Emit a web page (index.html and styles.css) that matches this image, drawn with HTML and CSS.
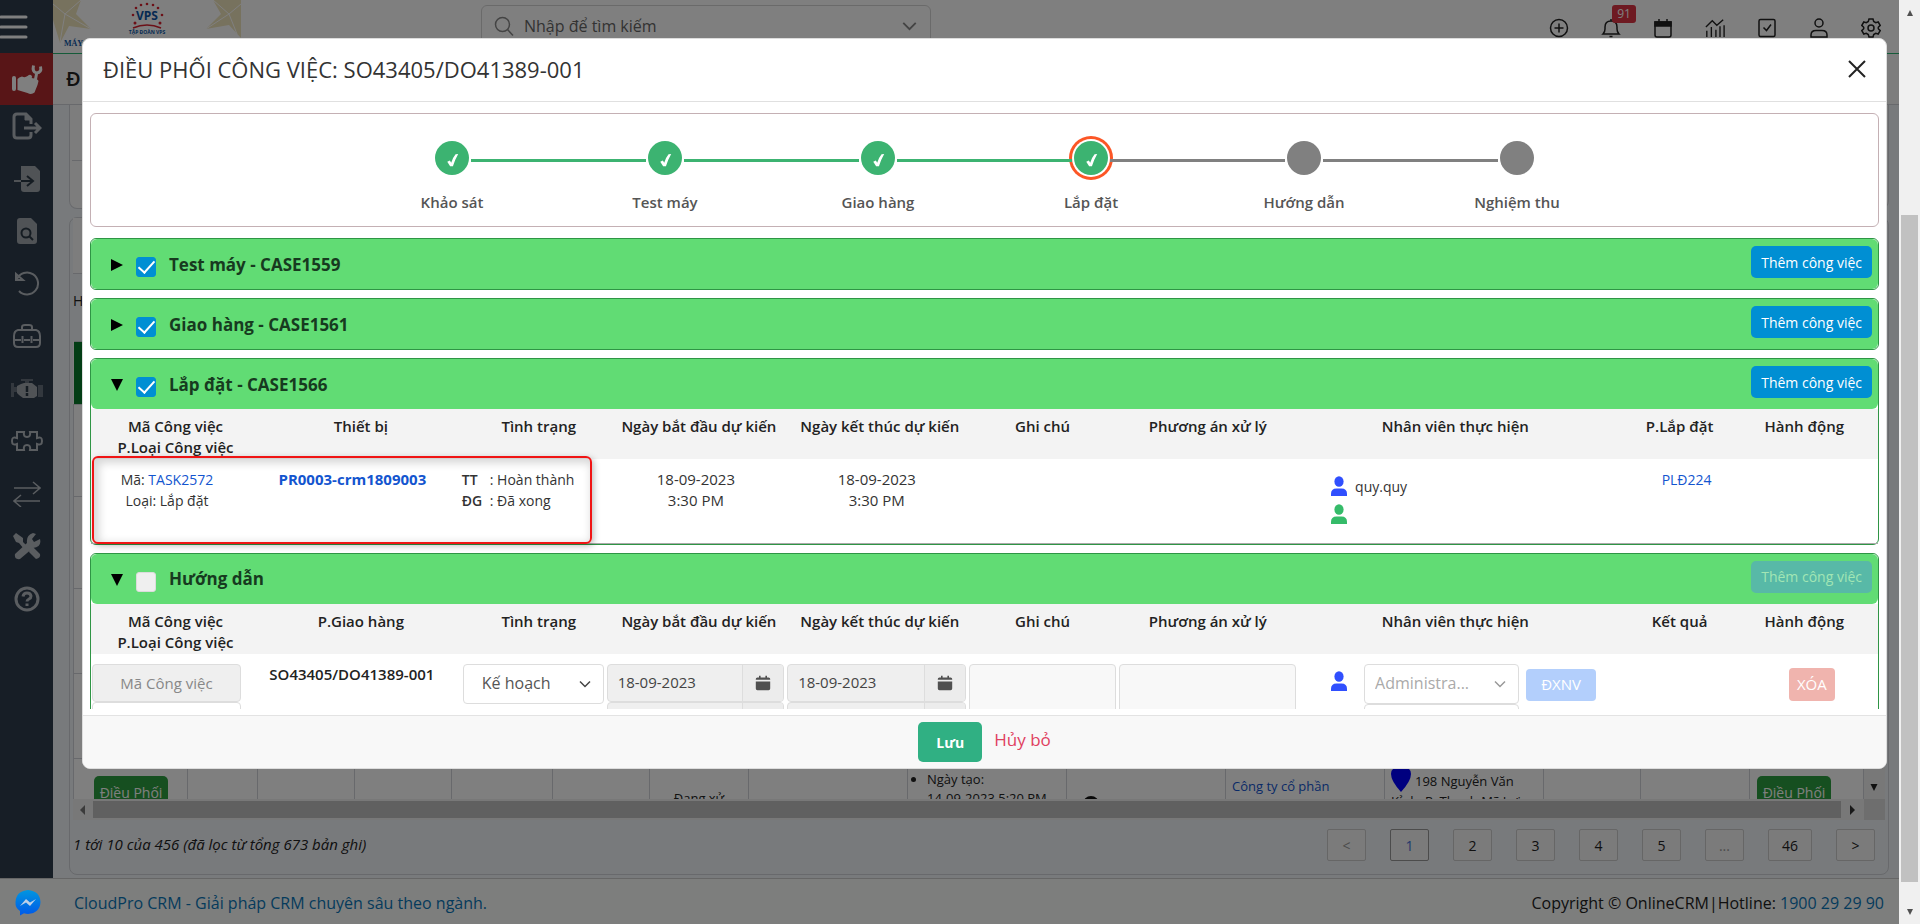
FILE: index.html
```html
<!DOCTYPE html>
<html lang="vi">
<head>
<meta charset="utf-8">
<title>Điều phối công việc</title>
<link rel="stylesheet" href="styles.css">
</head>
<body>
<svg class="defs" aria-hidden="true">
  <symbol id="i-cal" viewBox="0 0 20 20"><path fill="currentColor" d="M5 1h2v2h6V1h2v2h2q2 0 2 2v1H1V5q0-2 2-2h2zM1 8h18v9q0 2-2 2H3q-2 0-2-2z"/></symbol>
  <symbol id="i-user" viewBox="0 0 16 20"><ellipse cx="8" cy="5.5" rx="4.6" ry="5.3" fill="currentColor"/><path fill="currentColor" d="M0 20v-2q0-5.500 5.500-5.500h5q5.500 0 5.500 5.500v2z"/></symbol>
  <symbol id="i-chev" viewBox="0 0 12 8"><path fill="none" stroke="currentColor" stroke-width="1.500" d="M1 1.500l5 5 5-5"/></symbol>
  <symbol id="i-tick" viewBox="0 0 14 16"><path fill="currentColor" d="M1 10l3-1.500 1.500 2.500Q7.500 5 10.500 1.500l3-.5Q10 7 7.500 15H4.300z"/></symbol>
  <symbol id="i-right" viewBox="0 0 12 12"><path fill="currentColor" d="M0 0l12 6-12 6z"/></symbol>
  <symbol id="i-down" viewBox="0 0 12 12"><path fill="currentColor" d="M0 0h12L6 12z"/></symbol>
</svg>
<div class="window">
  <div class="app">
    <div class="upper">
      <nav class="side" aria-label="Menu">
        <button class="burger" aria-label="Menu"><svg width="28" height="26" viewBox="0 0 28 26"><path stroke="currentColor" stroke-width="3" stroke-linecap="round" d="M1 3h25M1 13h25M1 23h25"/></svg></button>
        <a href="#" class="active" aria-label="Dịch vụ"><svg width="32" height="32" viewBox="0 0 32 32" fill="currentColor"><rect x="1" y="13" width="4" height="15" rx="2"/><path d="M6.500 16q1.500-2 4.500-2.500 3 1.500 5.500-.5 2.500-2 4-.5 1.500 1.500 0 2.500 6.500.5 7 3l-1 4-3 7.500q-3 2.500-7 .5L6.500 27z"/><path fill="none" stroke="currentColor" stroke-width="3" d="M25.500 11L24 19M22.500 2.500Q21 9 25.500 10q5.500-.5 4-6.500"/></svg></a>
        <div class="links">
          <a href="#" aria-label="Xuất"><svg width="30" height="28" viewBox="0 0 30 28" fill="none" stroke="currentColor" stroke-width="3"><path d="M19 20v3q0 3-3 3H5q-3 0-3-3V5q0-3 3-3h9l5 5v5M12 16h16M23 11l5 5-5 5"/><path fill="currentColor" d="M13 2v6h6" stroke-width="1"/></svg></a>
          <a href="#" class="dim" aria-label="Nhập"><svg width="30" height="28" viewBox="0 0 30 28"><path fill="currentColor" d="M9 1h14l5 5v18q0 3-3 3H12q-3 0-3-3z"/><path fill="none" stroke="#2b3845" stroke-width="2" d="M9 16h11M15 11l6 5-6 5"/><path stroke="currentColor" stroke-width="2" d="M2 16h7"/></svg></a>
          <a href="#" class="dim" aria-label="Tra cứu"><svg width="30" height="28" viewBox="0 0 30 28"><path fill="currentColor" d="M5 4q0-3 3-3h11l6 6v17q0 3-3 3H8q-3 0-3-3z"/><g fill="none" stroke="#2b3845" stroke-width="2"><circle cx="14" cy="16" r="4.500"/><path d="M17 19l4 4"/></g></svg></a>
          <a href="#" aria-label="Hoàn tác"><svg width="26" height="26" viewBox="0 0 26 26" fill="none" stroke="currentColor" stroke-width="2"><path d="M3 8A11 11 0 1 1 5 20M2 3v6h7z"/></svg></a>
          <a href="#" aria-label="Công cụ"><svg width="28" height="26" viewBox="0 0 28 26" fill="none" stroke="currentColor" stroke-width="2"><path d="M9 7V4q0-2 3-2h4q3 0 3 2v3M5 7h18q4 1 4 6v7q0 4-4 4H5q-4 0-4-4v-7q0-5 4-6zM1 17h7M11 17h6M20 17h7M9.500 13v7M18.500 13v7"/></svg></a>
          <a href="#" class="dim" aria-label="Cảnh báo"><svg width="34" height="22" viewBox="0 0 34 22"><path fill="currentColor" d="M14 5h8l5 4v9l-3 2H13l-4-3-2-2V8l4-2z"/><path fill="currentColor" opacity=".5" d="M11 1h12v2h-4v2h-4V3h-4zM1 5h3v4h3v5H4v5H1zM28 7h5v12h-5z"/><path stroke="#2b3845" stroke-width="2.500" d="M17 8v6M17 15v3"/></svg></a>
          <a href="#" aria-label="Tiện ích"><svg width="34" height="22" viewBox="0 0 34 22" fill="none" stroke="currentColor" stroke-width="2"><path d="M7 2h7q-1 5 3 5t3-5h7v6q5-2 5 3t-5 3v6h-7q1-5-3-5t-3 5H7v-6q-5 2-5-3t5-3z"/></svg></a>
          <a href="#" aria-label="Chuyển đổi"><svg width="28" height="26" viewBox="0 0 28 26" fill="none" stroke="currentColor" stroke-width="1.500"><path d="M1 7h26M20 1l7 6-7 6M27 20H1M8 14l-7 6 7 6"/></svg></a>
          <a href="#" aria-label="Sửa chữa"><svg width="28" height="28" viewBox="0 0 28 28"><path fill="currentColor" d="M3 1l7 5v4l4 4-3 3-5-6-3-1-3-6zM17 16l3-1 7 7q1 4-4 5l-7-7z"/><path fill="currentColor" d="M2 22L14 11Q13 3 20 1l3 1-4 5 2 3 6-3q2 8-7 9L7 27q-6 1-5-5z"/></svg></a>
          <a href="#" aria-label="Trợ giúp"><svg width="26" height="26" viewBox="0 0 26 26" fill="none" stroke="currentColor" stroke-width="3"><circle cx="13" cy="13" r="11"/><path d="M9 10.500q.5-3.500 4-3.500t4 3q0 2-2 3t-2 2.500M13 17.500v2.500"/></svg></a>
        </div>
      </nav>
      <div class="main">
        <header class="top">
          <svg class="logo" width="188" height="50" viewBox="0 0 188 50" role="img" aria-label="Tập đoàn VPS">
            <path fill="#efe4bd" d="M0 0h28l-5 14 15 15-22-3-9 17L0 20zM160 0h28v38l-12-13-23 4 15-15z"/>
            <path fill="none" stroke="#fff" d="M0 4l12 10L28 0M12 14l26 15M12 14L7 42M188 4l-12 10L160 0M176 14l-23 15M176 14l8 20"/>
            <g fill="#d8202f"><circle cx="83" cy="8" r="1.300"/><circle cx="88" cy="5" r="1.300"/><circle cx="94" cy="4" r="1.300"/><circle cx="100" cy="5" r="1.300"/><circle cx="105" cy="8" r="1.300"/><circle cx="109" cy="15" r="1.300"/><circle cx="80" cy="15" r="1.300"/><circle cx="82" cy="23" r="1.500"/><circle cx="107" cy="23" r="1.500"/></g>
            <path fill="none" stroke="#d8202f" stroke-width="1.500" d="M80 28q14-6 28 0"/>
            <text x="94" y="20" text-anchor="middle" class="logo-a">VPS</text>
            <text x="94" y="34" text-anchor="middle" class="logo-b">TẬP ĐOÀN VPS</text>
            <text x="11" y="46" class="logo-c">MÁY</text>
          </svg>
          <label class="search">
            <svg width="20" height="20" viewBox="0 0 20 20" fill="none" stroke="currentColor" stroke-width="1.500"><circle cx="8.500" cy="8.500" r="7"/><path d="M13.500 13.500l5.500 6"/></svg>
            <input type="text" placeholder="Nhập để tìm kiếm" aria-label="Tìm kiếm">
            <svg width="17" height="10"><use href="#i-chev"/></svg>
          </label>
          <div class="tools">
            <button aria-label="Thêm"><svg viewBox="0 0 20 20"><circle cx="10" cy="10" r="8.500"/><path d="M10 5.500v9M5.500 10h9"/></svg></button>
            <button aria-label="Thông báo"><svg viewBox="0 0 20 20"><path d="M2 16h16q-2-2-2-5V9q0-6-6-6T4 9v2q0 3-2 5zM10 1v2M8.500 18.500h3"/></svg><span class="badge">91</span></button>
            <button aria-label="Lịch"><svg viewBox="0 0 20 20"><path d="M2 4h16v13q0 2-2 2H4q-2 0-2-2zM6 1v3M14 1v3"/><path fill="currentColor" d="M2 4h16v4H2z"/></svg></button>
            <button aria-label="Báo cáo"><svg viewBox="0 0 22 20"><path d="M1 9l7-7 5 5 7-6M2 20v-7M7 20v-11M12 20v-8M16.500 20V8M21 20V7"/></svg></button>
            <button aria-label="Công việc"><svg viewBox="0 0 20 20"><rect x="2" y="1.500" width="16" height="17" rx="1.500"/><path d="M6.500 9.500l3 3 4.500-6"/></svg></button>
            <button aria-label="Tài khoản"><svg viewBox="0 0 20 20"><circle cx="10" cy="5" r="4"/><path d="M2 19v-2q0-4.500 5-4.500h6q5 0 5 4.500v2z"/></svg></button>
            <button aria-label="Cài đặt"><svg viewBox="0 0 20 20"><circle cx="10" cy="10" r="3"/><path d="M8 1h4l.7 2.500 2 1.200 2.500-.7 2 3.400-1.900 1.800v1.600l1.900 1.800-2 3.400-2.500-.7-2 1.200L12 19H8l-.7-2.500-2-1.200-2.500.7-2-3.400 1.900-1.800V9.200L.8 7.400l2-3.400 2.500.7 2-1.200z"/></svg></button>
          </div>
        </header>
        <div class="titlebar"><h1>ĐI</h1></div>
        <section class="card card-filter"><div></div></section>
        <section class="card card-list">
          <div class="listbar"></div>
          <div class="tabs">H</div>
          <div class="scroller">
            <div class="grid-view">
              <table class="grid">
                <colgroup><col class="g114"><col class="g70"><col class="g97"><col class="g97"><col class="g102"><col class="g97"><col class="g99"><col class="g159"><col class="g159"><col class="g159"><col class="g159"><col class="g159"><col class="g97"><col class="g109"><col></colgroup>
                <thead><tr><th></th><th></th><th></th><th></th><th></th><th></th><th></th><th></th><th></th><th></th><th></th><th></th><th></th><th></th><th></th></tr></thead>
                <tbody>
                  <tr class="tall"><td></td><td></td><td></td><td></td><td></td><td></td><td></td><td></td><td></td><td></td><td></td><td></td><td></td><td></td><td></td></tr>
                  <tr class="tall"><td></td><td></td><td></td><td></td><td></td><td></td><td></td><td></td><td></td><td></td><td></td><td></td><td></td><td></td><td></td></tr>
                  <tr><td></td><td></td><td></td><td></td><td></td><td></td><td></td><td></td><td></td><td></td><td></td><td></td><td></td><td></td><td></td></tr>
                  <tr><td></td><td></td><td></td><td></td><td></td><td></td><td></td><td></td><td></td><td></td><td></td><td></td><td></td><td></td><td></td></tr>
                  <tr class="last">
                    <td><button class="dispatch">Điều Phối</button></td><td></td><td></td><td></td><td></td><td></td>
                    <td class="state">Đang xử</td>
                    <td></td>
                    <td><ul><li>Ngày tạo:<br>14-09-2023 5:20 PM</li></ul></td>
                    <td class="dot"><span></span></td>
                    <td class="company"><a href="#">Công ty cổ phần</a></td>
                    <td class="addr"><svg width="20" height="27" viewBox="0 0 20 27"><path fill="#00f" d="M0 9a10 9 0 0 1 20 0q0 7-10 18Q0 16 0 9z"/></svg>198 Nguyễn Văn<br>Kỉnh, P. Thạnh Mỹ Lợi</td>
                    <td></td><td></td>
                    <td><button class="dispatch">Điều Phối</button></td>
                  </tr>
                </tbody>
              </table>
              <div class="vbar" aria-hidden="true"><svg width="10" height="7"><use href="#i-down"/></svg></div>
            </div>
            <div class="hbar" aria-hidden="true"><span class="arr arr-l"></span><span class="hthumb"></span><span class="arr arr-r"></span><span class="corner"></span></div>
          </div>
          <div class="pager">
            <em>1 tới 10 của 456 (đã lọc từ tổng 673 bản ghi)</em>
            <div class="pages"><button class="off">&lt;</button><button class="on">1</button><button>2</button><button>3</button><button>4</button><button>5</button><button class="off">...</button><button>46</button><button>&gt;</button></div>
          </div>
        </section>
      </div>
    </div>
    <footer class="foot">
      <a href="#">CloudPro CRM - Giải pháp CRM chuyên sâu theo ngành.</a>
      <span>Copyright © OnlineCRM|Hotline: <a href="#">1900 29 29 90</a></span>
    </footer>

    <div class="layer">
      <div class="modal" role="dialog" aria-labelledby="mt">
        <div class="modal-head">
          <h2 id="mt">ĐIỀU PHỐI CÔNG VIỆC: SO43405/DO41389-001</h2>
          <button aria-label="Đóng"><svg width="18" height="18" viewBox="0 0 18 18"><path stroke="#222" stroke-width="2" d="M1 1l16 16M17 1L1 17"/></svg></button>
        </div>
        <div class="modal-body">
          <ol class="steps">
            <li class="done"><i><svg width="13" height="14"><use href="#i-tick"/></svg></i>Khảo sát</li>
            <li class="done"><i><svg width="13" height="14"><use href="#i-tick"/></svg></i>Test máy</li>
            <li class="done"><i><svg width="13" height="14"><use href="#i-tick"/></svg></i>Giao hàng</li>
            <li class="done now"><i><svg width="13" height="14"><use href="#i-tick"/></svg></i>Lắp đặt</li>
            <li><i></i>Hướng dẫn</li>
            <li><i></i>Nghiệm thu</li>
          </ol>
          <section class="panel">
            <div class="panel-head"><button class="tri" aria-label="Mở"><svg width="12" height="12"><use href="#i-right"/></svg></button><label><input type="checkbox" checked>Test máy - CASE1559</label><button class="add">Thêm công việc</button></div>
          </section>
          <section class="panel">
            <div class="panel-head"><button class="tri" aria-label="Mở"><svg width="12" height="12"><use href="#i-right"/></svg></button><label><input type="checkbox" checked>Giao hàng - CASE1561</label><button class="add">Thêm công việc</button></div>
          </section>
          <section class="panel">
            <div class="panel-head"><button class="tri" aria-label="Đóng"><svg width="12" height="12"><use href="#i-down"/></svg></button><label><input type="checkbox" checked>Lắp đặt - CASE1566</label><button class="add">Thêm công việc</button></div>
            <table class="tasks">
              <colgroup><col class="c1"><col class="c2"><col class="c3"><col class="c4"><col class="c5"><col class="c6"><col class="c7"><col class="c8"><col class="c9"><col class="c10"></colgroup>
              <thead><tr><th>Mã Công việc<br>P.Loại Công việc</th><th>Thiết bị</th><th>Tình trạng</th><th>Ngày bắt đầu dự kiến</th><th>Ngày kết thúc dự kiến</th><th>Ghi chú</th><th>Phương án xử lý</th><th>Nhân viên thực hiện</th><th>P.Lắp đặt</th><th>Hành động</th></tr></thead>
              <tbody><tr class="view">
                <td>Mã: <a href="#">TASK2572</a><br>Loại: Lắp đặt</td>
                <td><a href="#" class="strong">PR0003-crm1809003</a></td>
                <td><dl><dt>TT</dt><dd>: Hoàn thành</dd><dt>ĐG</dt><dd>: Đã xong</dd></dl></td>
                <td class="when">18-09-2023<br>3:30 PM</td>
                <td class="when">18-09-2023<br>3:30 PM</td>
                <td></td><td></td>
                <td><div class="staff blue"><svg width="16" height="20"><use href="#i-user"/></svg>quy.quy</div><div class="staff green"><svg width="16" height="20"><use href="#i-user"/></svg></div></td>
                <td class="plan"><a href="#">PLĐ224</a></td>
                <td></td>
              </tr></tbody>
            </table>
            <div class="highlight"></div>
          </section>
          <section class="panel">
            <div class="panel-head"><button class="tri" aria-label="Đóng"><svg width="12" height="12"><use href="#i-down"/></svg></button><label><input type="checkbox">Hướng dẫn</label><button class="add" disabled>Thêm công việc</button></div>
            <table class="tasks">
              <colgroup><col class="c1"><col class="c2"><col class="c3"><col class="c4"><col class="c5"><col class="c6"><col class="c7"><col class="c8"><col class="c9"><col class="c10"></colgroup>
              <thead><tr><th>Mã Công việc<br>P.Loại Công việc</th><th>P.Giao hàng</th><th>Tình trạng</th><th>Ngày bắt đầu dự kiến</th><th>Ngày kết thúc dự kiến</th><th>Ghi chú</th><th>Phương án xử lý</th><th>Nhân viên thực hiện</th><th>Kết quả</th><th>Hành động</th></tr></thead>
              <tbody><tr class="edit">
                <td><input class="code" type="text" placeholder="Mã Công việc" aria-label="Mã Công việc" disabled><input class="code open" type="text" aria-label="Loại"></td>
                <td class="order">SO43405/DO41389-001</td>
                <td><div class="pick"><select aria-label="Tình trạng"><option>Kế hoạch</option></select><svg width="12" height="8"><use href="#i-chev"/></svg></div></td>
                <td><div class="date"><input type="text" value="18-09-2023" aria-label="Ngày bắt đầu"><button aria-label="Chọn ngày"><svg width="16" height="18"><use href="#i-cal"/></svg></button></div><div class="date"><input type="text" aria-label="Giờ bắt đầu"><button aria-label="Chọn giờ"></button></div></td>
                <td><div class="date"><input type="text" value="18-09-2023" aria-label="Ngày kết thúc"><button aria-label="Chọn ngày"><svg width="16" height="18"><use href="#i-cal"/></svg></button></div><div class="date"><input type="text" aria-label="Giờ kết thúc"><button aria-label="Chọn giờ"></button></div></td>
                <td><textarea aria-label="Ghi chú"></textarea></td>
                <td><textarea aria-label="Phương án xử lý"></textarea></td>
                <td><div class="assign"><svg class="who" width="16" height="20"><use href="#i-user"/></svg><div class="pick pale"><select aria-label="Nhân viên" disabled><option>Administra...</option></select><svg width="12" height="8"><use href="#i-chev"/></svg></div><button class="dx" disabled>ĐXNV</button></div>
                <div class="assign second"><div class="pick pale"><select aria-label="Nhân viên phụ" disabled></select></div><button class="dx" aria-label="Đề xuất" disabled></button></div></td>
                <td></td>
                <td><button class="del" disabled>XÓA</button></td>
              </tr></tbody>
            </table>
          </section>
        </div>
        <div class="modal-foot"><button class="save">Lưu</button><a href="#" class="cancel">Hủy bỏ</a></div>
      </div>
      <a href="#" class="messenger" aria-label="Messenger"><svg width="26" height="26" viewBox="0 0 26 26"><defs><linearGradient id="mg" x1="0" y1="0" x2="0" y2="1"><stop offset="0" stop-color="#0096e0"/><stop offset="1" stop-color="#0058e8"/></linearGradient></defs><path fill="url(#mg)" d="M13 0q12 1 12.500 12Q25 23 13 24q-2 0-4-.7L5 25.500V21Q0 18 .5 12 1 1 13 0z"/><path fill="#bdd0e8" d="M5 16l6-7 4 3.500 6-3.500-6 7-4-3.500z"/></svg></a>
    </div>
  </div>
  <div class="winbar" aria-hidden="true"><svg class="up" width="10" height="6"><use href="#i-down"/></svg><span></span><svg width="10" height="6"><use href="#i-down"/></svg></div>
</div>
</body>
</html>
```
FILE: styles.css
```css
* { box-sizing: border-box; }
body { margin: 0; font: 14px/21px "Open Sans", "Noto Sans", sans-serif; color: #222; }
button, input, select, textarea { font: inherit; color: inherit; margin: 0; }
button { padding: 0; border: 0; background: none; }
a { color: #1355cf; text-decoration: none; }
h1, h2, ol, ul, dl, dd { margin: 0; padding: 0; }
.defs { position: absolute; width: 0; height: 0; }
svg { display: block; }

.window { display: flex; height: 100vh; overflow: hidden; }
.app { position: relative; flex: 1; min-width: 0; display: flex; flex-direction: column; }
.upper { flex: 1; min-height: 0; display: flex; }

/* Window scroll bar */
.winbar { width: 21px; padding: 10px 0 9px; background: #f0f0f0; color: #505050; display: flex; flex-direction: column; align-items: center; }
.winbar span { flex: 1; width: 17px; margin: 199px 0 27px; background: #c1c1c1; }
.winbar .up { transform: rotate(180deg); }

/* Side menu */
.side { width: 53px; background: #2e3c4c; color: #b4bac0; }
.side a, .side button { display: flex; align-items: center; justify-content: center; }
.burger { width: 100%; height: 53px; color: #fff; }
.side .burger { justify-content: flex-start; }
.side .active { height: 52px; background: #b02a2e; color: #fff; }
.links { display: flex; flex-direction: column; justify-content: space-between; height: 515px; }
.links a { height: 42px; color: inherit; }
.links .dim { color: #a0a6ac; }

/* Header */
.main { flex: 1; min-width: 0; display: flex; flex-direction: column; background: #f1f4f9; }
.top { height: 54px; background: #fff; border-bottom: 1px solid #2bb673; display: flex; align-items: flex-start; }
.logo-a { font: 700 12px "Open Sans", sans-serif; fill: #0c55a5; }
.logo-b { font: 700 5px "Open Sans", sans-serif; fill: #0c55a5; }
.logo-c { font: 700 8px "Liberation Serif", serif; fill: #0c55a5; }
.search { display: flex; align-items: center; gap: 10px; width: 450px; height: 42px; margin: 5px 0 0 240px; padding: 0 12px; border: 1px solid #d5d5d5; border-radius: 6px; color: #888; }
.search input { flex: 1; border: 0; background: none; font-size: 16px; outline: 0; padding: 0; }
.search input::placeholder { color: #666; opacity: 1; }
.tools { display: flex; gap: 31px; margin: 17px 17px 0 auto; }
.tools button { position: relative; width: 21px; height: 21px; color: #222; }
.tools svg { width: 20px; height: 20px; fill: none; stroke: currentColor; stroke-width: 1.500; }
.badge { position: absolute; left: 11px; top: -12px; width: 24px; height: 18px; border-radius: 3px; background: #dc3545; color: #fff; font-size: 12px; line-height: 18px; }
.titlebar { height: 51px; padding: 11px 13px; background: #fafafa; border-bottom: 1px solid #d0d3d8; }
h1 { font-size: 20px; line-height: 28px; font-weight: 600; }

/* Background cards */
.card { margin: 0 10px 0 16px; border: 1px solid #d0d3d8; border-radius: 8px; background: #fafafa; }
.card-filter { height: 104px; border-top: 0; border-radius: 0 0 8px 8px; padding: 0 2px; }
.card-filter div { height: 56px; border-bottom: 1px solid #d0d3d8; }
.card-list { flex: 1; min-height: 0; margin-top: 8px; margin-bottom: 3px; padding: 0 3px; background: #f1f4f9; display: flex; flex-direction: column; }
.listbar { height: 56px; background: #fafafa; border-bottom: 1px solid #d0d3d8; }
.tabs { height: 67px; padding-top: 16px; }
.scroller { flex: 1; min-height: 0; display: flex; flex-direction: column; }
.grid-view { flex: 1; min-height: 0; overflow: hidden; display: flex; background: #fff; }
.grid { width: 100%; height: 100px; flex: 1; table-layout: fixed; border-collapse: collapse; font-size: 13px; line-height: 19px; }
.grid th { height: 63px; background: #067a2a; border-top: 1px solid #d0d3d8; }
.grid td { height: 85px; padding: 0; vertical-align: top; border: 1px solid #d0d3d8; }
.grid .tall td { height: 92px; }
.grid .last td { height: 120px; }
.g114 { width: 114px; } .g70 { width: 70px; } .g97 { width: 97px; } .g99 { width: 99px; } .g102 { width: 101px; } .g159 { width: 159px; } .g109 { width: 109px; }
.dispatch { display: block; width: 74px; height: 32px; margin: 17px 0 0 20px; border-radius: 5px; background: #2d9f40; color: #fff; font-size: 14px; }
td:last-child .dispatch { margin-left: 7px; }
.grid .state { padding-top: 30px; text-align: center; }
.grid ul { padding: 11px 0 0 19px; }
.grid .dot span { display: block; width: 16px; height: 16px; margin: 37px 0 0 16px; border-radius: 50%; background: #111; }
.grid .company { padding: 18px 0 0 6px; }
.grid .addr { padding: 13px 0 0 6px; white-space: nowrap; }
.grid .addr svg { display: inline-block; height: 27px; margin: -15px 4px 0 0; vertical-align: -6px; }
.vbar { width: 21px; padding: 18px 5px; background: #f0f0f0; display: flex; align-items: flex-end; }
.vbar svg { margin-bottom: -10px; }
.hbar { display: flex; align-items: center; height: 21px; background: #f0f0f0; }
.hthumb { flex: 1; height: 17px; background: #c1c1c1; }
.arr { border: 5px solid transparent; }
.arr-l { margin: 0 8px 0 7px; border-left: 0; border-right-color: #777; }
.arr-r { margin: 0 9px; border-right: 0; border-left-color: #333; }
.corner { width: 21px; height: 21px; background: #dcdcdc; }
.pager { display: flex; justify-content: space-between; padding: 9px 10px 0 0; height: 54px; }
.pager em { line-height: 30px; font-size: 15px; }
.pages { display: flex; gap: 24px; }
.pages button { min-width: 39px; height: 32px; padding: 0 13px; border: 1px solid #ccc; border-radius: 2px; background: #f6f6f6; font-size: 14px; }
.pages .on { border-color: #999; color: #4472d8; }
.pages .off { color: #999; }

.foot { display: flex; justify-content: space-between; align-items: center; height: 46px; padding: 3px 15px 0 74px; background: #fafcfa; border-top: 1px solid #ccc; font-size: 16px; }
.foot a { color: #0b77b8; }

/* Dialog */
.layer { position: absolute; inset: 0; padding: 38px 12px 0 82px; background: rgba(0, 0, 0, .5); }
.messenger { position: absolute; left: 15px; bottom: 8px; }
.modal { display: flex; flex-direction: column; height: calc(100vh - 193px); border: 1px solid #ddd; border-radius: 8px; background: #fff; overflow: hidden; }
.modal-head { display: flex; justify-content: space-between; align-items: center; height: 63px; padding: 0 20px 2px; border-bottom: 1px solid #e0e0e0; }
.modal-head h2 { font-size: 22px; line-height: 28px; font-weight: 500; color: #333; }
.modal-body { flex: 1; min-height: 0; margin-bottom: 6px; padding: 11px 7px 0; overflow: hidden; }
.modal-foot { display: flex; justify-content: center; gap: 12px; height: 53px; padding-top: 6px; border-top: 1px solid #e3e3e3; background: #f8f8f8; }
.save { width: 64px; height: 40px; border-radius: 5px; background: #30b083; color: #fff; font-weight: 700; }
.cancel { font-size: 17px; line-height: 36px; color: #e0405f; }

.steps { display: flex; justify-content: center; height: 114px; padding-top: 27px; border: 1px solid #c4b0b4; border-radius: 6px; list-style: none; font-size: 15px; font-weight: 600; color: #555; }
.steps li { position: relative; width: 213px; display: flex; flex-direction: column; align-items: center; gap: 17px; }
.steps i { display: flex; align-items: center; justify-content: center; width: 34px; height: 34px; padding-top: 4px; border-radius: 50%; background: #808080; color: #fff; }
.steps li + li::before { content: ""; position: absolute; top: 18px; right: calc(50% + 19px); width: calc(100% - 38px); height: 3px; background: #808080; }
.steps .done i { background: #3cb371; }
.steps li.done + .done::before { background: #3cb371; }
.steps .now i { box-shadow: 0 0 0 2px #fff, 0 0 0 5px #fc5626; }

.panel { position: relative; margin-top: 8px; border: 1px solid #2f9545; border-radius: 6px; }
.steps + .panel { margin-top: 11px; }
.panel-head { display: flex; align-items: flex-start; height: 50px; padding: 7px 6px 0 20px; border-radius: 6px; background: #61dc74; }
.tri { margin: 13px 13px 0 0; color: #000; }
.panel-head label { display: flex; align-items: center; gap: 13px; margin: 6px auto 0 0; font-size: 17px; line-height: 24px; font-weight: 700; color: #173a1f; }
.panel-head label input { appearance: none; width: 20px; height: 20px; margin-top: 5px; border-radius: 3px; background: #efefef; border: 1px solid #dcdcdc; display: grid; place-items: center; }
.panel-head label input:checked { background: #008fd3; border-color: #008fd3; }
.panel-head label input:checked::after { content: ""; width: 7px; height: 14px; margin-top: -5px; border: solid #fff; border-width: 0 2px 2px 0; transform: rotate(42deg); }
.add { height: 32px; padding: 0 10px; border-radius: 5px; background: #008fd3; color: #fff; }
.add:disabled { background: #58b9a7; color: #a2e6b4; }

.tasks { width: 100%; table-layout: fixed; border-collapse: collapse; text-align: center; }
.c1 { width: 8.5%; } .c2 { width: 12.25%; } .c3 { width: 8.05%; } .c4 { width: 10.1%; } .c5 { width: 10.15%; } .c6 { width: 8.4%; } .c7 { width: 10.1%; } .c8 { width: 17.6%; } .c9 { width: 7.5%; }
.tasks thead { background: #f3f3f3; }
.tasks th { padding: 7px 0 0; height: 50px; vertical-align: top; font-size: 15px; font-weight: 600; }
.tasks th:nth-child(-n+5) { padding: 7px 0 0 6px; }
.tasks th:nth-child(-n+2) { padding-left: 17px; }
.tasks th:nth-child(3) { padding-left: 10px; }
.tasks th:last-child { padding-right: 16px; }
.tasks td { padding: 10px 0 0; vertical-align: top; color: #333; }
.view td { height: 84px; border-bottom: 1px solid #aaa; }
.view .when { font-size: 15px; }
.strong { font-size: 15px; font-weight: 700; }
dl { display: grid; grid-template-columns: 28px 1fr; text-align: left; }
dt { font-weight: 600; }
.staff { display: flex; align-items: center; gap: 8px; height: 28px; padding-left: 33px; }
.staff:first-child { margin-top: 3px; }
.staff svg, .who { color: #304ffe; }
.staff.green svg { color: #35bb69; }
.tasks .plan { padding-left: 14px; }
.highlight { position: absolute; left: 1px; top: 97px; width: 500px; height: 88px; border: 2px solid #f01414; border-radius: 6px; box-shadow: inset 3px 3px 8px 2px rgba(0, 0, 0, .16), 2px 2px 6px rgba(0, 0, 0, .25); }

.edit td { height: 120px; padding: 10px 2px 0 1px; }
.code { display: block; width: 100%; height: 38px; border: 1px solid #ddd; border-radius: 4px; background: #efefef; text-align: center; padding: 0; font-size: 15px; }
.code::placeholder { color: #888; opacity: 1; }
.code.open { background: #fff; }
.tasks .order { font-size: 15px; font-weight: 600; color: #222; }
.pick { position: relative; display: flex; align-items: center; }
.pick select { appearance: none; width: 100%; height: 40px; padding: 0 18px; border: 1px solid #ddd; border-radius: 4px; background: #fff; font-size: 16px; color: #555; opacity: 1; }
.pick svg { position: absolute; right: 13px; color: #444; }
.pick.pale select { padding: 0 10px; color: #aaa; }
.pick.pale svg { color: #999; }
.date { display: flex; height: 38px; border: 1px solid #ddd; border-radius: 4px; background: #efefef; overflow: hidden; color: #444; font-size: 15px; }
.date input { flex: 1; min-width: 0; padding: 0 10px; border: 0; background: none; }
.date button { width: 41px; border-left: 1px solid #ddd; display: grid; place-items: center; background: #ececec; color: #505050; }
textarea { display: block; width: 100%; height: 54px; border: 1px solid #ddd; border-radius: 4px; background: #f8f8f8; }
.assign { display: flex; align-items: center; padding-left: 32px; height: 40px; }
.assign .pick { width: 155px; margin: 0 7px 0 17px; }
.who { margin-top: -6px; }
.assign.second { padding-left: 48px; }
.dx { width: 70px; height: 32px; margin-top: 2px; border-radius: 4px; background: #b3cffc; color: #fff; font-size: 15px; }
.del { width: 46px; height: 33px; margin-top: 4px; border-radius: 4px; background: #f0b4ae; color: #fff; font-size: 15px; }
```
